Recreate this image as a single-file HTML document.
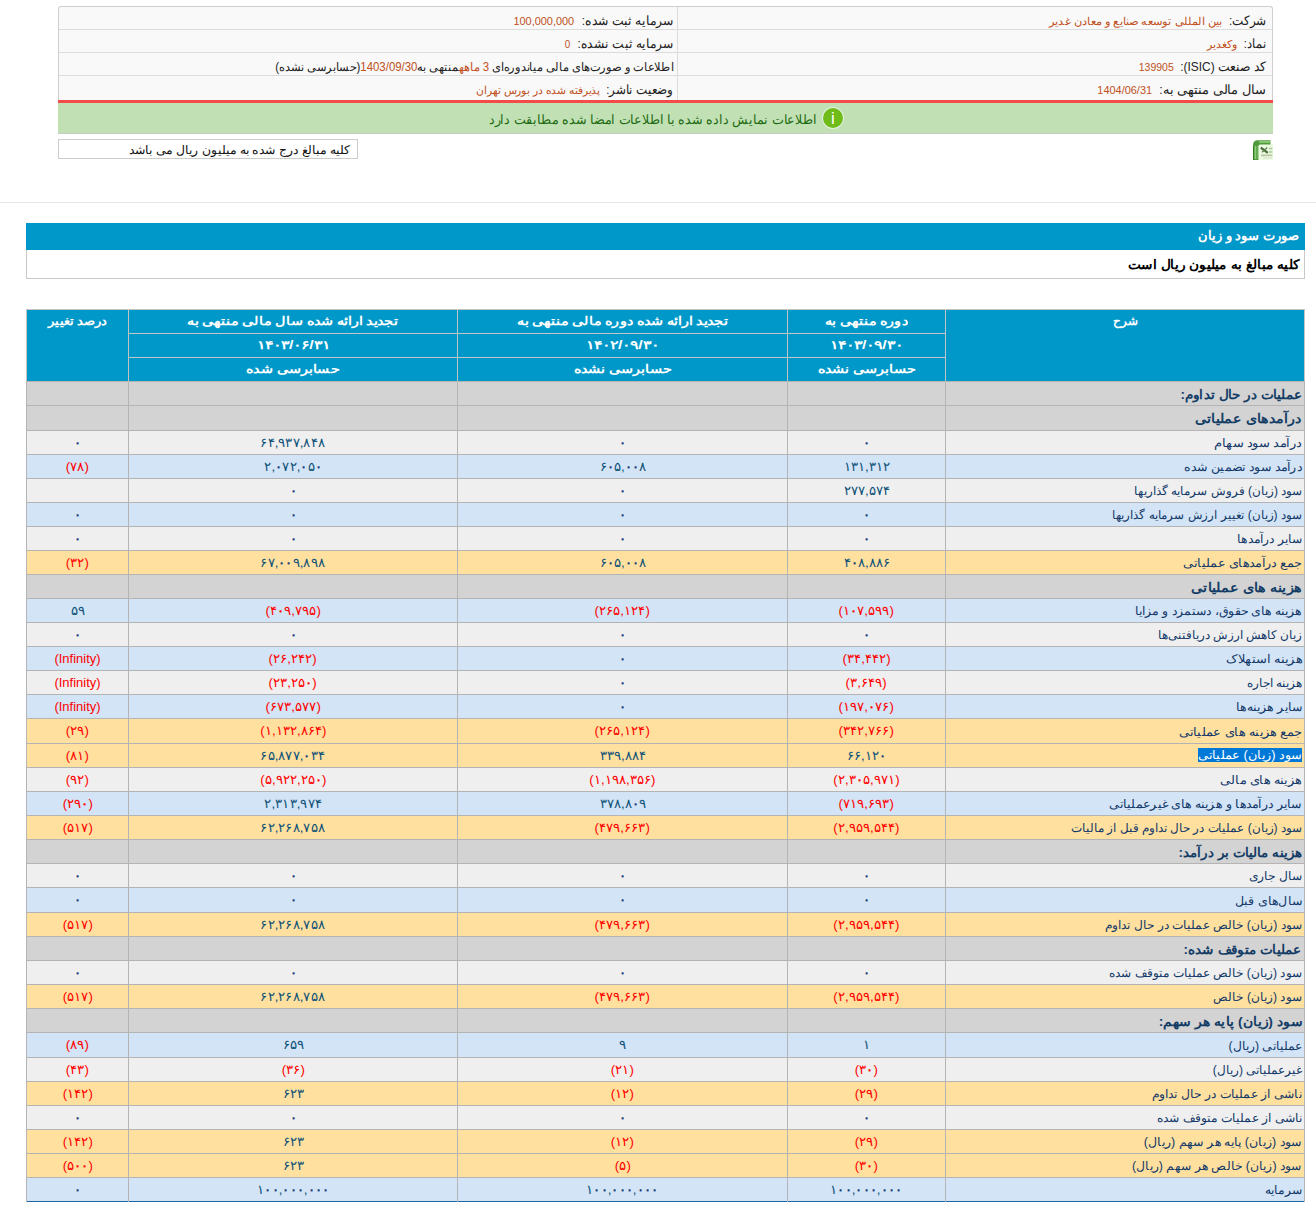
<!DOCTYPE html>
<html lang="fa"><head><meta charset="utf-8"><title>Codal</title>
<style>
*{box-sizing:border-box}
html,body{margin:0;padding:0;background:#fff;width:1316px;height:1230px;overflow:hidden;font-family:"Liberation Sans",sans-serif;}
.a{position:absolute}
.t{white-space:nowrap;direction:rtl}
.s{display:inline-block;white-space:nowrap}
.iv{color:#c0501c;font-size:11px}
.il{position:absolute;height:23px;line-height:23px;font-size:12.5px;color:#222;white-space:nowrap;direction:rtl}
.hc{position:absolute;color:#fff;font-weight:bold;font-size:12px;text-align:center;height:23px;line-height:23px;white-space:nowrap;direction:rtl}
.rl{position:absolute;left:946px;width:358px;text-align:right;padding-right:2px;font-size:12px;color:#12396a;white-space:nowrap;direction:rtl}
.rh{font-weight:bold;font-size:13px;color:#143d66}
.nc{position:absolute;text-align:center;font-size:13px;white-space:nowrap}
.np{color:#0f5279}.nn{color:#ff0000}
.z{font-weight:bold;color:#173a7a}.nn .z{color:#ff0000}
</style></head><body>

<div class="a" style="left:58px;top:6px;width:1215px;height:95px;background:#f9f9f9;border:1px solid #cfcfcf;border-bottom:none;border-radius:3px 3px 0 0"></div>
<div class="a" style="left:59px;top:29px;width:1213px;height:1px;background:#dcdcdc"></div>
<div class="a" style="left:59px;top:52px;width:1213px;height:1px;background:#dcdcdc"></div>
<div class="a" style="left:59px;top:75px;width:1213px;height:1px;background:#dcdcdc"></div>
<div class="a" style="left:677px;top:7px;width:1px;height:93px;background:#dcdcdc"></div>
<div class="a t" style="right:49.80px;top:10px;height:23px;line-height:23px;font-size:12.5px;color:#222"><span class="s" style="transform:scaleX(0.9238);transform-origin:right center">شرکت:</span></div>
<div class="a t" style="right:93.60px;top:10px;height:23px;line-height:23px;font-size:11px;color:#c0501c"><span class="s" style="transform:scaleX(1.0356);transform-origin:right center">بین المللی توسعه صنایع و معادن غدیر</span></div>
<div class="a t" style="right:49.80px;top:33px;height:23px;line-height:23px;font-size:12.5px;color:#222"><span class="s" style="transform:scaleX(0.8946);transform-origin:right center">نماد:</span></div>
<div class="a t" style="right:79.00px;top:33px;height:23px;line-height:23px;font-size:11px;color:#c0501c"><span class="s" style="transform:scaleX(1.0034);transform-origin:right center">وکغدیر</span></div>
<div class="a t" style="right:49.80px;top:56px;height:23px;line-height:23px;font-size:12.5px;color:#222"><span class="s" style="transform:scaleX(0.9526);transform-origin:right center">کد صنعت (ISIC):</span></div>
<div class="a t" style="right:142.50px;top:56px;height:23px;line-height:23px;font-size:11px;color:#c0501c"><span class="s" style="transform:scaleX(0.9532);transform-origin:right center">139905</span></div>
<div class="a t" style="right:49.80px;top:79px;height:23px;line-height:23px;font-size:12.5px;color:#222"><span class="s" style="transform:scaleX(0.9980);transform-origin:right center">سال مالی منتهی به:</span></div>
<div class="a t" style="right:163.80px;top:79px;height:23px;line-height:23px;font-size:11px;color:#c0501c"><span class="s" style="transform:scaleX(0.9934);transform-origin:right center">1404/06/31</span></div>
<div class="a t" style="right:642.90px;top:10px;height:23px;line-height:23px;font-size:12.5px;color:#222"><span class="s" style="transform:scaleX(0.9520);transform-origin:right center">سرمایه ثبت شده:</span></div>
<div class="a t" style="right:741.40px;top:10px;height:23px;line-height:23px;font-size:11px;color:#c0501c"><span class="s" style="transform:scaleX(0.9923);transform-origin:right center">100,000,000</span></div>
<div class="a t" style="right:642.90px;top:33px;height:23px;line-height:23px;font-size:12.5px;color:#222"><span class="s" style="transform:scaleX(0.9455);transform-origin:right center">سرمایه ثبت نشده:</span></div>
<div class="a t" style="right:745.60px;top:33px;height:23px;line-height:23px;font-size:11px;color:#c0501c"><span class="s" style="transform:scaleX(0.8979);transform-origin:right center">0</span></div>
<div class="a t" style="right:642.90px;top:56px;height:23px;line-height:23px;font-size:12px;color:#222"><span class="s" style="transform:scaleX(0.9514);transform-origin:right center">اطلاعات و صورت‌های مالی میاندوره‌ای <span style="color:#c0501c">3 ماهه</span>منتهی به<span style="color:#c0501c">1403/09/30</span>(حسابرسی نشده)</span></div>
<div class="a t" style="right:642.90px;top:79px;height:23px;line-height:23px;font-size:12.5px;color:#222"><span class="s" style="transform:scaleX(0.9156);transform-origin:right center">وضعیت ناشر:</span></div>
<div class="a t" style="right:715.90px;top:79px;height:23px;line-height:23px;font-size:11px;color:#c0501c"><span class="s" style="transform:scaleX(0.9746);transform-origin:right center">پذیرفته شده در بورس تهران</span></div>
<div class="a" style="left:58px;top:100px;width:1215px;height:3px;background:#f34a4a"></div>
<div class="a" style="left:58px;top:103px;width:1215px;height:31px;background:#c1e1b5;border-bottom:1px solid #c9c9c9"></div>
<div class="a" style="left:823px;top:108px;width:20px;height:20px;border-radius:50%;background:#6fbb18;box-shadow:0 0 0 1px rgba(255,255,255,.55);color:#fff;font-size:17px;line-height:21px;text-align:center">i</div>
<div class="a t" style="right:499px;top:105px;height:30px;line-height:30px;font-size:12.7px;color:#1e6b12"><span class="s" id="grn" style="transform:scaleX(0.977);transform-origin:right center">اطلاعات نمایش داده شده با اطلاعات امضا شده مطابقت دارد</span></div>
<svg class="a" style="left:1253px;top:140px" width="20" height="20" viewBox="0 0 20 20">
<rect x="5" y="4" width="15" height="16" fill="#eafbe0"/>
<path d="M0 20 V5 Q0 0.3 5 0.3 H17.5 V4.6 H7 Q5.4 4.6 5.4 6.5 V20 Z" fill="#4f9a3a"/>
<rect x="0" y="6" width="1" height="14" fill="#2f7a20"/>
<rect x="1.6" y="6" width="1.4" height="13" fill="#90cc7c"/>
<rect x="3.6" y="6" width="1" height="13" fill="#7dbb6a"/>
<rect x="6" y="1.4" width="11" height="1.1" fill="#b2e6a0"/>
<path d="M7.8 7.6 L14.8 12.8" stroke="#4a6a3a" stroke-width="2.2"/>
<path d="M14.2 7.4 L9 12.2" stroke="#5f7d4f" stroke-width="1.3"/>
<rect x="16" y="7.8" width="3.4" height="1.5" fill="#aac59c"/>
<rect x="16" y="11.2" width="3.4" height="1.5" fill="#aac59c"/>
<rect x="8" y="14.5" width="11.4" height="1.7" fill="#b9c6a0"/>
<rect x="10" y="17.4" width="9" height="1" fill="#d9ded5"/>
</svg>
<div class="a t" style="left:58px;top:139px;width:300px;height:20px;border:1px solid #cccccc;background:#fff;line-height:21px;font-size:12px;color:#111;padding-right:6px;text-align:right"><span class="s" id="note" style="transform:scaleX(1.034);transform-origin:right center">کلیه مبالغ درج شده به میلیون ریال می باشد</span></div>
<div class="a" style="left:0;top:202px;width:1316px;height:1px;background:#e8e8e8"></div>
<div class="a t" style="left:26px;top:223px;width:1279px;height:27px;background:#0097c9;color:#fff;font-weight:bold;font-size:13px;line-height:26px;text-align:right;padding-right:6px">صورت سود و زیان</div>
<div class="a t" style="left:26px;top:250px;width:1279px;height:29px;background:#fff;border:1px solid #c8c8c8;border-top:none;color:#000;font-weight:bold;font-size:13px;line-height:29px;text-align:right;padding-right:5px"><span class="s" style="transform:scaleX(1.05);transform-origin:right center">کلیه مبالغ به میلیون ریال است</span></div>
<div class="a" style="left:26px;top:309px;width:1279px;height:73px;background:#0097c9"></div>
<div class="a" style="left:26px;top:309px;width:1px;height:73px;background:#c4c4c4"></div>
<div class="a" style="left:128px;top:309px;width:1px;height:73px;background:#c4c4c4"></div>
<div class="a" style="left:457px;top:309px;width:1px;height:73px;background:#c4c4c4"></div>
<div class="a" style="left:787px;top:309px;width:1px;height:73px;background:#c4c4c4"></div>
<div class="a" style="left:945px;top:309px;width:1px;height:73px;background:#c4c4c4"></div>
<div class="a" style="left:1304px;top:309px;width:1px;height:73px;background:#c4c4c4"></div>
<div class="a" style="left:26px;top:309px;width:1279px;height:1px;background:#c4c4c4"></div>
<div class="a" style="left:128px;top:333px;width:818px;height:1px;background:#c4c4c4"></div>
<div class="a" style="left:128px;top:357px;width:818px;height:1px;background:#c4c4c4"></div>
<div class="hc" style="left:946px;top:310px;width:358px"><span class="s" style="transform:scaleX(1.0)">شرح</span></div>
<div class="hc" style="left:27px;top:310px;width:101px"><span class="s" style="transform:scaleX(1.09)">درصد تغییر</span></div>
<div class="hc" style="left:788px;top:310px;width:157px"><span class="s" style="transform:scaleX(1.2)">دوره منتهی به</span></div>
<div class="hc" style="left:788px;top:334px;width:157px"><span class="s" style="transform:scaleX(1.33)">۱۴۰۳/۰۹/۳۰</span></div>
<div class="hc" style="left:788px;top:358px;width:157px"><span class="s" style="transform:scaleX(1.2)">حسابرسی نشده</span></div>
<div class="hc" style="left:458px;top:310px;width:329px"><span class="s" style="transform:scaleX(1.2)">تجدید ارائه شده دوره مالی منتهی به</span></div>
<div class="hc" style="left:458px;top:334px;width:329px"><span class="s" style="transform:scaleX(1.33)">۱۴۰۲/۰۹/۳۰</span></div>
<div class="hc" style="left:458px;top:358px;width:329px"><span class="s" style="transform:scaleX(1.2)">حسابرسی نشده</span></div>
<div class="hc" style="left:129px;top:310px;width:328px"><span class="s" style="transform:scaleX(1.2)">تجدید ارائه شده سال مالی منتهی به</span></div>
<div class="hc" style="left:129px;top:334px;width:328px"><span class="s" style="transform:scaleX(1.33)">۱۴۰۳/۰۶/۳۱</span></div>
<div class="hc" style="left:129px;top:358px;width:328px"><span class="s" style="transform:scaleX(1.2)">حسابرسی شده</span></div>
<div class="a" style="left:26px;top:381px;width:1279px;height:24px;background:#d3d3d3;border-top:1px solid #b4b4b4"></div>
<div class="a" style="left:26px;top:405px;width:1279px;height:25px;background:#d3d3d3;border-top:1px solid #b4b4b4"></div>
<div class="a" style="left:26px;top:430px;width:1279px;height:24px;background:#efefef;border-top:1px solid #b4b4b4"></div>
<div class="a" style="left:26px;top:454px;width:1279px;height:24px;background:#d2e4f5;border-top:1px solid #b4b4b4"></div>
<div class="a" style="left:26px;top:478px;width:1279px;height:24px;background:#efefef;border-top:1px solid #b4b4b4"></div>
<div class="a" style="left:26px;top:502px;width:1279px;height:24px;background:#d2e4f5;border-top:1px solid #b4b4b4"></div>
<div class="a" style="left:26px;top:526px;width:1279px;height:24px;background:#efefef;border-top:1px solid #b4b4b4"></div>
<div class="a" style="left:26px;top:550px;width:1279px;height:24px;background:#ffe09e;border-top:1px solid #b4b4b4"></div>
<div class="a" style="left:26px;top:574px;width:1279px;height:24px;background:#d3d3d3;border-top:1px solid #b4b4b4"></div>
<div class="a" style="left:26px;top:598px;width:1279px;height:24px;background:#d2e4f5;border-top:1px solid #b4b4b4"></div>
<div class="a" style="left:26px;top:622px;width:1279px;height:24px;background:#efefef;border-top:1px solid #b4b4b4"></div>
<div class="a" style="left:26px;top:646px;width:1279px;height:24px;background:#d2e4f5;border-top:1px solid #b4b4b4"></div>
<div class="a" style="left:26px;top:670px;width:1279px;height:24px;background:#efefef;border-top:1px solid #b4b4b4"></div>
<div class="a" style="left:26px;top:694px;width:1279px;height:24px;background:#d2e4f5;border-top:1px solid #b4b4b4"></div>
<div class="a" style="left:26px;top:718px;width:1279px;height:25px;background:#ffe09e;border-top:1px solid #b4b4b4"></div>
<div class="a" style="left:26px;top:743px;width:1279px;height:24px;background:#ffe09e;border-top:1px solid #b4b4b4"></div>
<div class="a" style="left:26px;top:767px;width:1279px;height:24px;background:#efefef;border-top:1px solid #b4b4b4"></div>
<div class="a" style="left:26px;top:791px;width:1279px;height:24px;background:#d2e4f5;border-top:1px solid #b4b4b4"></div>
<div class="a" style="left:26px;top:815px;width:1279px;height:24px;background:#ffe09e;border-top:1px solid #b4b4b4"></div>
<div class="a" style="left:26px;top:839px;width:1279px;height:24px;background:#d3d3d3;border-top:1px solid #b4b4b4"></div>
<div class="a" style="left:26px;top:863px;width:1279px;height:24px;background:#efefef;border-top:1px solid #b4b4b4"></div>
<div class="a" style="left:26px;top:887px;width:1279px;height:25px;background:#d2e4f5;border-top:1px solid #b4b4b4"></div>
<div class="a" style="left:26px;top:912px;width:1279px;height:24px;background:#ffe09e;border-top:1px solid #b4b4b4"></div>
<div class="a" style="left:26px;top:936px;width:1279px;height:24px;background:#d3d3d3;border-top:1px solid #b4b4b4"></div>
<div class="a" style="left:26px;top:960px;width:1279px;height:24px;background:#efefef;border-top:1px solid #b4b4b4"></div>
<div class="a" style="left:26px;top:984px;width:1279px;height:24px;background:#ffe09e;border-top:1px solid #b4b4b4"></div>
<div class="a" style="left:26px;top:1008px;width:1279px;height:24px;background:#d3d3d3;border-top:1px solid #b4b4b4"></div>
<div class="a" style="left:26px;top:1032px;width:1279px;height:25px;background:#d2e4f5;border-top:1px solid #b4b4b4"></div>
<div class="a" style="left:26px;top:1057px;width:1279px;height:24px;background:#efefef;border-top:1px solid #b4b4b4"></div>
<div class="a" style="left:26px;top:1081px;width:1279px;height:24px;background:#ffe09e;border-top:1px solid #b4b4b4"></div>
<div class="a" style="left:26px;top:1105px;width:1279px;height:24px;background:#efefef;border-top:1px solid #b4b4b4"></div>
<div class="a" style="left:26px;top:1129px;width:1279px;height:24px;background:#ffe09e;border-top:1px solid #b4b4b4"></div>
<div class="a" style="left:26px;top:1153px;width:1279px;height:24px;background:#ffe09e;border-top:1px solid #b4b4b4"></div>
<div class="a" style="left:26px;top:1177px;width:1279px;height:24px;background:#d2e4f5;border-top:1px solid #b4b4b4"></div>
<div class="a" style="left:27px;top:1201px;width:1277px;height:1px;background:#1b67a4"></div>
<div class="a" style="left:26px;top:381px;width:1px;height:821px;background:#b4b4b4"></div>
<div class="a" style="left:128px;top:381px;width:1px;height:821px;background:#b4b4b4"></div>
<div class="a" style="left:457px;top:381px;width:1px;height:821px;background:#b4b4b4"></div>
<div class="a" style="left:787px;top:381px;width:1px;height:821px;background:#b4b4b4"></div>
<div class="a" style="left:945px;top:381px;width:1px;height:821px;background:#b4b4b4"></div>
<div class="a" style="left:1304px;top:381px;width:1px;height:821px;background:#b4b4b4"></div>
<div class="rl rh" style="top:383.000px;height:23.000px;line-height:23.000px"><span class="s" style="transform:scaleX(1.0390);transform-origin:right center">عملیات در حال تداوم:</span></div>
<div class="rl rh" style="top:407.000px;height:24.000px;line-height:24.000px"><span class="s" style="transform:scaleX(1.0929);transform-origin:right center">درآمدهای عملیاتی</span></div>
<div class="rl" style="top:432.000px;height:23.000px;line-height:23.000px"><span class="s" style="transform:scaleX(1.0852);transform-origin:right center">درآمد سود سهام</span></div>
<div class="nc np" style="left:788px;top:431.000px;width:157px;height:23.000px;line-height:23.000px"><span class="s" style="transform:scaleX(1.02)"><b class="z">۰</b></span></div>
<div class="nc np" style="left:458px;top:431.000px;width:329px;height:23.000px;line-height:23.000px"><span class="s" style="transform:scaleX(1.02)"><b class="z">۰</b></span></div>
<div class="nc np" style="left:129px;top:431.000px;width:328px;height:23.000px;line-height:23.000px"><span class="s" style="transform:scaleX(1.02)">۶۴,۹۳۷,۸۴۸</span></div>
<div class="nc np" style="left:27px;top:431.000px;width:101px;height:23.000px;line-height:23.000px"><span class="s" style="transform:scaleX(1.02)"><b class="z">۰</b></span></div>
<div class="rl" style="top:456.000px;height:23.000px;line-height:23.000px"><span class="s" style="transform:scaleX(1.0502);transform-origin:right center">درآمد سود تضمین شده</span></div>
<div class="nc np" style="left:788px;top:455.000px;width:157px;height:23.000px;line-height:23.000px"><span class="s" style="transform:scaleX(1.02)">۱۳۱,۳۱۲</span></div>
<div class="nc np" style="left:458px;top:455.000px;width:329px;height:23.000px;line-height:23.000px"><span class="s" style="transform:scaleX(1.02)">۶<b class="z">۰</b>۵,<b class="z">۰</b><b class="z">۰</b>۸</span></div>
<div class="nc np" style="left:129px;top:455.000px;width:328px;height:23.000px;line-height:23.000px"><span class="s" style="transform:scaleX(1.02)">۲,<b class="z">۰</b>۷۲,<b class="z">۰</b>۵<b class="z">۰</b></span></div>
<div class="nc nn" style="left:27px;top:455.000px;width:101px;height:23.000px;line-height:23.000px"><span class="s" style="transform:scaleX(1.02)">(۷۸)</span></div>
<div class="rl" style="top:480.000px;height:23.000px;line-height:23.000px"><span class="s" style="transform:scaleX(0.9995);transform-origin:right center">سود (زیان) فروش سرمایه گذاریها</span></div>
<div class="nc np" style="left:788px;top:479.000px;width:157px;height:23.000px;line-height:23.000px"><span class="s" style="transform:scaleX(1.02)">۲۷۷,۵۷۴</span></div>
<div class="nc np" style="left:458px;top:479.000px;width:329px;height:23.000px;line-height:23.000px"><span class="s" style="transform:scaleX(1.02)"><b class="z">۰</b></span></div>
<div class="nc np" style="left:129px;top:479.000px;width:328px;height:23.000px;line-height:23.000px"><span class="s" style="transform:scaleX(1.02)"><b class="z">۰</b></span></div>
<div class="rl" style="top:504.000px;height:23.000px;line-height:23.000px"><span class="s" style="transform:scaleX(0.9919);transform-origin:right center">سود (زیان) تغییر ارزش سرمایه گذاریها</span></div>
<div class="nc np" style="left:788px;top:503.000px;width:157px;height:23.000px;line-height:23.000px"><span class="s" style="transform:scaleX(1.02)"><b class="z">۰</b></span></div>
<div class="nc np" style="left:458px;top:503.000px;width:329px;height:23.000px;line-height:23.000px"><span class="s" style="transform:scaleX(1.02)"><b class="z">۰</b></span></div>
<div class="nc np" style="left:129px;top:503.000px;width:328px;height:23.000px;line-height:23.000px"><span class="s" style="transform:scaleX(1.02)"><b class="z">۰</b></span></div>
<div class="nc np" style="left:27px;top:503.000px;width:101px;height:23.000px;line-height:23.000px"><span class="s" style="transform:scaleX(1.02)"><b class="z">۰</b></span></div>
<div class="rl" style="top:528.000px;height:23.000px;line-height:23.000px"><span class="s" style="transform:scaleX(1.0280);transform-origin:right center">سایر درآمدها</span></div>
<div class="nc np" style="left:788px;top:527.000px;width:157px;height:23.000px;line-height:23.000px"><span class="s" style="transform:scaleX(1.02)"><b class="z">۰</b></span></div>
<div class="nc np" style="left:458px;top:527.000px;width:329px;height:23.000px;line-height:23.000px"><span class="s" style="transform:scaleX(1.02)"><b class="z">۰</b></span></div>
<div class="nc np" style="left:129px;top:527.000px;width:328px;height:23.000px;line-height:23.000px"><span class="s" style="transform:scaleX(1.02)"><b class="z">۰</b></span></div>
<div class="nc np" style="left:27px;top:527.000px;width:101px;height:23.000px;line-height:23.000px"><span class="s" style="transform:scaleX(1.02)"><b class="z">۰</b></span></div>
<div class="rl" style="top:552.000px;height:23.000px;line-height:23.000px"><span class="s" style="transform:scaleX(1.0679);transform-origin:right center">جمع درآمدهای عملیاتی</span></div>
<div class="nc np" style="left:788px;top:551.000px;width:157px;height:23.000px;line-height:23.000px"><span class="s" style="transform:scaleX(1.02)">۴<b class="z">۰</b>۸,۸۸۶</span></div>
<div class="nc np" style="left:458px;top:551.000px;width:329px;height:23.000px;line-height:23.000px"><span class="s" style="transform:scaleX(1.02)">۶<b class="z">۰</b>۵,<b class="z">۰</b><b class="z">۰</b>۸</span></div>
<div class="nc np" style="left:129px;top:551.000px;width:328px;height:23.000px;line-height:23.000px"><span class="s" style="transform:scaleX(1.02)">۶۷,<b class="z">۰</b><b class="z">۰</b>۹,۸۹۸</span></div>
<div class="nc nn" style="left:27px;top:551.000px;width:101px;height:23.000px;line-height:23.000px"><span class="s" style="transform:scaleX(1.02)">(۳۲)</span></div>
<div class="rl rh" style="top:576.000px;height:23.000px;line-height:23.000px"><span class="s" style="transform:scaleX(1.1108);transform-origin:right center">هزینه های عملیاتی</span></div>
<div class="rl" style="top:600.000px;height:23.000px;line-height:23.000px"><span class="s" style="transform:scaleX(1.0386);transform-origin:right center">هزینه های حقوق، دستمزد و مزایا</span></div>
<div class="nc nn" style="left:788px;top:599.000px;width:157px;height:23.000px;line-height:23.000px"><span class="s" style="transform:scaleX(1.02)">(۱<b class="z">۰</b>۷,۵۹۹)</span></div>
<div class="nc nn" style="left:458px;top:599.000px;width:329px;height:23.000px;line-height:23.000px"><span class="s" style="transform:scaleX(1.02)">(۲۶۵,۱۲۴)</span></div>
<div class="nc nn" style="left:129px;top:599.000px;width:328px;height:23.000px;line-height:23.000px"><span class="s" style="transform:scaleX(1.02)">(۴<b class="z">۰</b>۹,۷۹۵)</span></div>
<div class="nc np" style="left:27px;top:599.000px;width:101px;height:23.000px;line-height:23.000px"><span class="s" style="transform:scaleX(1.02)">۵۹</span></div>
<div class="rl" style="top:624.000px;height:23.000px;line-height:23.000px"><span class="s" style="transform:scaleX(0.9941);transform-origin:right center">زیان کاهش ارزش دریافتنی‌ها</span></div>
<div class="nc np" style="left:788px;top:623.000px;width:157px;height:23.000px;line-height:23.000px"><span class="s" style="transform:scaleX(1.02)"><b class="z">۰</b></span></div>
<div class="nc np" style="left:458px;top:623.000px;width:329px;height:23.000px;line-height:23.000px"><span class="s" style="transform:scaleX(1.02)"><b class="z">۰</b></span></div>
<div class="nc np" style="left:129px;top:623.000px;width:328px;height:23.000px;line-height:23.000px"><span class="s" style="transform:scaleX(1.02)"><b class="z">۰</b></span></div>
<div class="nc np" style="left:27px;top:623.000px;width:101px;height:23.000px;line-height:23.000px"><span class="s" style="transform:scaleX(1.02)"><b class="z">۰</b></span></div>
<div class="rl" style="top:648.000px;height:23.000px;line-height:23.000px"><span class="s" style="transform:scaleX(1.0890);transform-origin:right center">هزینه استهلاک</span></div>
<div class="nc nn" style="left:788px;top:647.000px;width:157px;height:23.000px;line-height:23.000px"><span class="s" style="transform:scaleX(1.02)">(۳۴,۴۴۲)</span></div>
<div class="nc np" style="left:458px;top:647.000px;width:329px;height:23.000px;line-height:23.000px"><span class="s" style="transform:scaleX(1.02)"><b class="z">۰</b></span></div>
<div class="nc nn" style="left:129px;top:647.000px;width:328px;height:23.000px;line-height:23.000px"><span class="s" style="transform:scaleX(1.02)">(۲۶,۲۴۲)</span></div>
<div class="nc nn" style="left:27px;top:647.000px;width:101px;height:23.000px;line-height:23.000px">(Infinity)</div>
<div class="rl" style="top:672.000px;height:23.000px;line-height:23.000px"><span class="s" style="transform:scaleX(1.0036);transform-origin:right center">هزینه اجاره</span></div>
<div class="nc nn" style="left:788px;top:671.000px;width:157px;height:23.000px;line-height:23.000px"><span class="s" style="transform:scaleX(1.02)">(۳,۶۴۹)</span></div>
<div class="nc np" style="left:458px;top:671.000px;width:329px;height:23.000px;line-height:23.000px"><span class="s" style="transform:scaleX(1.02)"><b class="z">۰</b></span></div>
<div class="nc nn" style="left:129px;top:671.000px;width:328px;height:23.000px;line-height:23.000px"><span class="s" style="transform:scaleX(1.02)">(۲۳,۲۵<b class="z">۰</b>)</span></div>
<div class="nc nn" style="left:27px;top:671.000px;width:101px;height:23.000px;line-height:23.000px">(Infinity)</div>
<div class="rl" style="top:696.000px;height:23.000px;line-height:23.000px"><span class="s" style="transform:scaleX(1.0453);transform-origin:right center">سایر هزینه‌ها</span></div>
<div class="nc nn" style="left:788px;top:695.000px;width:157px;height:23.000px;line-height:23.000px"><span class="s" style="transform:scaleX(1.02)">(۱۹۷,<b class="z">۰</b>۷۶)</span></div>
<div class="nc np" style="left:458px;top:695.000px;width:329px;height:23.000px;line-height:23.000px"><span class="s" style="transform:scaleX(1.02)"><b class="z">۰</b></span></div>
<div class="nc nn" style="left:129px;top:695.000px;width:328px;height:23.000px;line-height:23.000px"><span class="s" style="transform:scaleX(1.02)">(۶۷۳,۵۷۷)</span></div>
<div class="nc nn" style="left:27px;top:695.000px;width:101px;height:23.000px;line-height:23.000px">(Infinity)</div>
<div class="rl" style="top:720.000px;height:24.000px;line-height:24.000px"><span class="s" style="transform:scaleX(1.0797);transform-origin:right center">جمع هزینه های عملیاتی</span></div>
<div class="nc nn" style="left:788px;top:719.000px;width:157px;height:24.000px;line-height:24.000px"><span class="s" style="transform:scaleX(1.02)">(۳۴۲,۷۶۶)</span></div>
<div class="nc nn" style="left:458px;top:719.000px;width:329px;height:24.000px;line-height:24.000px"><span class="s" style="transform:scaleX(1.02)">(۲۶۵,۱۲۴)</span></div>
<div class="nc nn" style="left:129px;top:719.000px;width:328px;height:24.000px;line-height:24.000px"><span class="s" style="transform:scaleX(1.02)">(۱,۱۳۲,۸۶۴)</span></div>
<div class="nc nn" style="left:27px;top:719.000px;width:101px;height:24.000px;line-height:24.000px"><span class="s" style="transform:scaleX(1.02)">(۲۹)</span></div>
<div class="a t" style="left:1198px;top:748px;width:104px;height:14px;background:#0078d7;color:#fff;font-size:12px;line-height:14px;text-align:right;overflow:hidden"><span class="s" style="transform:scaleX(1.07);transform-origin:right center">سود (زیان) عملیاتی</span></div>
<div class="nc np" style="left:788px;top:744.000px;width:157px;height:23.000px;line-height:23.000px"><span class="s" style="transform:scaleX(1.02)">۶۶,۱۲<b class="z">۰</b></span></div>
<div class="nc np" style="left:458px;top:744.000px;width:329px;height:23.000px;line-height:23.000px"><span class="s" style="transform:scaleX(1.02)">۳۳۹,۸۸۴</span></div>
<div class="nc np" style="left:129px;top:744.000px;width:328px;height:23.000px;line-height:23.000px"><span class="s" style="transform:scaleX(1.02)">۶۵,۸۷۷,<b class="z">۰</b>۳۴</span></div>
<div class="nc nn" style="left:27px;top:744.000px;width:101px;height:23.000px;line-height:23.000px"><span class="s" style="transform:scaleX(1.02)">(۸۱)</span></div>
<div class="rl" style="top:769.000px;height:23.000px;line-height:23.000px"><span class="s" style="transform:scaleX(1.0738);transform-origin:right center">هزینه های مالی</span></div>
<div class="nc nn" style="left:788px;top:768.000px;width:157px;height:23.000px;line-height:23.000px"><span class="s" style="transform:scaleX(1.02)">(۲,۳<b class="z">۰</b>۵,۹۷۱)</span></div>
<div class="nc nn" style="left:458px;top:768.000px;width:329px;height:23.000px;line-height:23.000px"><span class="s" style="transform:scaleX(1.02)">(۱,۱۹۸,۳۵۶)</span></div>
<div class="nc nn" style="left:129px;top:768.000px;width:328px;height:23.000px;line-height:23.000px"><span class="s" style="transform:scaleX(1.02)">(۵,۹۲۲,۲۵<b class="z">۰</b>)</span></div>
<div class="nc nn" style="left:27px;top:768.000px;width:101px;height:23.000px;line-height:23.000px"><span class="s" style="transform:scaleX(1.02)">(۹۲)</span></div>
<div class="rl" style="top:793.000px;height:23.000px;line-height:23.000px"><span class="s" style="transform:scaleX(1.0470);transform-origin:right center">سایر درآمدها و هزینه های غیرعملیاتی</span></div>
<div class="nc nn" style="left:788px;top:792.000px;width:157px;height:23.000px;line-height:23.000px"><span class="s" style="transform:scaleX(1.02)">(۷۱۹,۶۹۳)</span></div>
<div class="nc np" style="left:458px;top:792.000px;width:329px;height:23.000px;line-height:23.000px"><span class="s" style="transform:scaleX(1.02)">۳۷۸,۸<b class="z">۰</b>۹</span></div>
<div class="nc np" style="left:129px;top:792.000px;width:328px;height:23.000px;line-height:23.000px"><span class="s" style="transform:scaleX(1.02)">۲,۳۱۳,۹۷۴</span></div>
<div class="nc nn" style="left:27px;top:792.000px;width:101px;height:23.000px;line-height:23.000px"><span class="s" style="transform:scaleX(1.02)">(۲۹<b class="z">۰</b>)</span></div>
<div class="rl" style="top:817.000px;height:23.000px;line-height:23.000px"><span class="s" style="transform:scaleX(0.9942);transform-origin:right center">سود (زیان) عملیات در حال تداوم قبل از مالیات</span></div>
<div class="nc nn" style="left:788px;top:816.000px;width:157px;height:23.000px;line-height:23.000px"><span class="s" style="transform:scaleX(1.02)">(۲,۹۵۹,۵۴۴)</span></div>
<div class="nc nn" style="left:458px;top:816.000px;width:329px;height:23.000px;line-height:23.000px"><span class="s" style="transform:scaleX(1.02)">(۴۷۹,۶۶۳)</span></div>
<div class="nc np" style="left:129px;top:816.000px;width:328px;height:23.000px;line-height:23.000px"><span class="s" style="transform:scaleX(1.02)">۶۲,۲۶۸,۷۵۸</span></div>
<div class="nc nn" style="left:27px;top:816.000px;width:101px;height:23.000px;line-height:23.000px"><span class="s" style="transform:scaleX(1.02)">(۵۱۷)</span></div>
<div class="rl rh" style="top:841.000px;height:23.000px;line-height:23.000px"><span class="s" style="transform:scaleX(1.0290);transform-origin:right center">هزینه مالیات بر درآمد:</span></div>
<div class="rl" style="top:865.000px;height:23.000px;line-height:23.000px"><span class="s" style="transform:scaleX(1.0194);transform-origin:right center">سال جاری</span></div>
<div class="nc np" style="left:788px;top:864.000px;width:157px;height:23.000px;line-height:23.000px"><span class="s" style="transform:scaleX(1.02)"><b class="z">۰</b></span></div>
<div class="nc np" style="left:458px;top:864.000px;width:329px;height:23.000px;line-height:23.000px"><span class="s" style="transform:scaleX(1.02)"><b class="z">۰</b></span></div>
<div class="nc np" style="left:129px;top:864.000px;width:328px;height:23.000px;line-height:23.000px"><span class="s" style="transform:scaleX(1.02)"><b class="z">۰</b></span></div>
<div class="nc np" style="left:27px;top:864.000px;width:101px;height:23.000px;line-height:23.000px"><span class="s" style="transform:scaleX(1.02)"><b class="z">۰</b></span></div>
<div class="rl" style="top:889.000px;height:24.000px;line-height:24.000px"><span class="s" style="transform:scaleX(1.0503);transform-origin:right center">سال‌های قبل</span></div>
<div class="nc np" style="left:788px;top:888.000px;width:157px;height:24.000px;line-height:24.000px"><span class="s" style="transform:scaleX(1.02)"><b class="z">۰</b></span></div>
<div class="nc np" style="left:458px;top:888.000px;width:329px;height:24.000px;line-height:24.000px"><span class="s" style="transform:scaleX(1.02)"><b class="z">۰</b></span></div>
<div class="nc np" style="left:129px;top:888.000px;width:328px;height:24.000px;line-height:24.000px"><span class="s" style="transform:scaleX(1.02)"><b class="z">۰</b></span></div>
<div class="nc np" style="left:27px;top:888.000px;width:101px;height:24.000px;line-height:24.000px"><span class="s" style="transform:scaleX(1.02)"><b class="z">۰</b></span></div>
<div class="rl" style="top:914.000px;height:23.000px;line-height:23.000px"><span class="s" style="transform:scaleX(1.0152);transform-origin:right center">سود (زیان) خالص عملیات در حال تداوم</span></div>
<div class="nc nn" style="left:788px;top:913.000px;width:157px;height:23.000px;line-height:23.000px"><span class="s" style="transform:scaleX(1.02)">(۲,۹۵۹,۵۴۴)</span></div>
<div class="nc nn" style="left:458px;top:913.000px;width:329px;height:23.000px;line-height:23.000px"><span class="s" style="transform:scaleX(1.02)">(۴۷۹,۶۶۳)</span></div>
<div class="nc np" style="left:129px;top:913.000px;width:328px;height:23.000px;line-height:23.000px"><span class="s" style="transform:scaleX(1.02)">۶۲,۲۶۸,۷۵۸</span></div>
<div class="nc nn" style="left:27px;top:913.000px;width:101px;height:23.000px;line-height:23.000px"><span class="s" style="transform:scaleX(1.02)">(۵۱۷)</span></div>
<div class="rl rh" style="top:938.000px;height:23.000px;line-height:23.000px"><span class="s" style="transform:scaleX(1.0407);transform-origin:right center">عملیات متوقف شده:</span></div>
<div class="rl" style="top:962.000px;height:23.000px;line-height:23.000px"><span class="s" style="transform:scaleX(1.0086);transform-origin:right center">سود (زیان) خالص عملیات متوقف شده</span></div>
<div class="nc np" style="left:788px;top:961.000px;width:157px;height:23.000px;line-height:23.000px"><span class="s" style="transform:scaleX(1.02)"><b class="z">۰</b></span></div>
<div class="nc np" style="left:458px;top:961.000px;width:329px;height:23.000px;line-height:23.000px"><span class="s" style="transform:scaleX(1.02)"><b class="z">۰</b></span></div>
<div class="nc np" style="left:129px;top:961.000px;width:328px;height:23.000px;line-height:23.000px"><span class="s" style="transform:scaleX(1.02)"><b class="z">۰</b></span></div>
<div class="nc np" style="left:27px;top:961.000px;width:101px;height:23.000px;line-height:23.000px"><span class="s" style="transform:scaleX(1.02)"><b class="z">۰</b></span></div>
<div class="rl" style="top:986.000px;height:23.000px;line-height:23.000px"><span class="s" style="transform:scaleX(1.0079);transform-origin:right center">سود (زیان) خالص</span></div>
<div class="nc nn" style="left:788px;top:985.000px;width:157px;height:23.000px;line-height:23.000px"><span class="s" style="transform:scaleX(1.02)">(۲,۹۵۹,۵۴۴)</span></div>
<div class="nc nn" style="left:458px;top:985.000px;width:329px;height:23.000px;line-height:23.000px"><span class="s" style="transform:scaleX(1.02)">(۴۷۹,۶۶۳)</span></div>
<div class="nc np" style="left:129px;top:985.000px;width:328px;height:23.000px;line-height:23.000px"><span class="s" style="transform:scaleX(1.02)">۶۲,۲۶۸,۷۵۸</span></div>
<div class="nc nn" style="left:27px;top:985.000px;width:101px;height:23.000px;line-height:23.000px"><span class="s" style="transform:scaleX(1.02)">(۵۱۷)</span></div>
<div class="rl rh" style="top:1010.000px;height:23.000px;line-height:23.000px"><span class="s" style="transform:scaleX(1.0683);transform-origin:right center">سود (زیان) پایه هر سهم:</span></div>
<div class="rl" style="top:1034.000px;height:24.000px;line-height:24.000px"><span class="s" style="transform:scaleX(1.0213);transform-origin:right center">عملیاتی (ریال)</span></div>
<div class="nc np" style="left:788px;top:1033.000px;width:157px;height:24.000px;line-height:24.000px"><span class="s" style="transform:scaleX(1.02)">۱</span></div>
<div class="nc np" style="left:458px;top:1033.000px;width:329px;height:24.000px;line-height:24.000px"><span class="s" style="transform:scaleX(1.02)">۹</span></div>
<div class="nc np" style="left:129px;top:1033.000px;width:328px;height:24.000px;line-height:24.000px"><span class="s" style="transform:scaleX(1.02)">۶۵۹</span></div>
<div class="nc nn" style="left:27px;top:1033.000px;width:101px;height:24.000px;line-height:24.000px"><span class="s" style="transform:scaleX(1.02)">(۸۹)</span></div>
<div class="rl" style="top:1059.000px;height:23.000px;line-height:23.000px"><span class="s" style="transform:scaleX(1.0015);transform-origin:right center">غیرعملیاتی (ریال)</span></div>
<div class="nc nn" style="left:788px;top:1058.000px;width:157px;height:23.000px;line-height:23.000px"><span class="s" style="transform:scaleX(1.02)">(۳<b class="z">۰</b>)</span></div>
<div class="nc nn" style="left:458px;top:1058.000px;width:329px;height:23.000px;line-height:23.000px"><span class="s" style="transform:scaleX(1.02)">(۲۱)</span></div>
<div class="nc nn" style="left:129px;top:1058.000px;width:328px;height:23.000px;line-height:23.000px"><span class="s" style="transform:scaleX(1.02)">(۳۶)</span></div>
<div class="nc nn" style="left:27px;top:1058.000px;width:101px;height:23.000px;line-height:23.000px"><span class="s" style="transform:scaleX(1.02)">(۴۳)</span></div>
<div class="rl" style="top:1083.000px;height:23.000px;line-height:23.000px"><span class="s" style="transform:scaleX(1.0291);transform-origin:right center">ناشی از عملیات در حال تداوم</span></div>
<div class="nc nn" style="left:788px;top:1082.000px;width:157px;height:23.000px;line-height:23.000px"><span class="s" style="transform:scaleX(1.02)">(۲۹)</span></div>
<div class="nc nn" style="left:458px;top:1082.000px;width:329px;height:23.000px;line-height:23.000px"><span class="s" style="transform:scaleX(1.02)">(۱۲)</span></div>
<div class="nc np" style="left:129px;top:1082.000px;width:328px;height:23.000px;line-height:23.000px"><span class="s" style="transform:scaleX(1.02)">۶۲۳</span></div>
<div class="nc nn" style="left:27px;top:1082.000px;width:101px;height:23.000px;line-height:23.000px"><span class="s" style="transform:scaleX(1.02)">(۱۴۲)</span></div>
<div class="rl" style="top:1107.000px;height:23.000px;line-height:23.000px"><span class="s" style="transform:scaleX(1.0224);transform-origin:right center">ناشی از عملیات متوقف شده</span></div>
<div class="nc np" style="left:788px;top:1106.000px;width:157px;height:23.000px;line-height:23.000px"><span class="s" style="transform:scaleX(1.02)"><b class="z">۰</b></span></div>
<div class="nc np" style="left:458px;top:1106.000px;width:329px;height:23.000px;line-height:23.000px"><span class="s" style="transform:scaleX(1.02)"><b class="z">۰</b></span></div>
<div class="nc np" style="left:129px;top:1106.000px;width:328px;height:23.000px;line-height:23.000px"><span class="s" style="transform:scaleX(1.02)"><b class="z">۰</b></span></div>
<div class="nc np" style="left:27px;top:1106.000px;width:101px;height:23.000px;line-height:23.000px"><span class="s" style="transform:scaleX(1.02)"><b class="z">۰</b></span></div>
<div class="rl" style="top:1131.000px;height:23.000px;line-height:23.000px"><span class="s" style="transform:scaleX(1.0477);transform-origin:right center">سود (زیان) پایه هر سهم (ریال)</span></div>
<div class="nc nn" style="left:788px;top:1130.000px;width:157px;height:23.000px;line-height:23.000px"><span class="s" style="transform:scaleX(1.02)">(۲۹)</span></div>
<div class="nc nn" style="left:458px;top:1130.000px;width:329px;height:23.000px;line-height:23.000px"><span class="s" style="transform:scaleX(1.02)">(۱۲)</span></div>
<div class="nc np" style="left:129px;top:1130.000px;width:328px;height:23.000px;line-height:23.000px"><span class="s" style="transform:scaleX(1.02)">۶۲۳</span></div>
<div class="nc nn" style="left:27px;top:1130.000px;width:101px;height:23.000px;line-height:23.000px"><span class="s" style="transform:scaleX(1.02)">(۱۴۲)</span></div>
<div class="rl" style="top:1155.000px;height:23.000px;line-height:23.000px"><span class="s" style="transform:scaleX(1.0301);transform-origin:right center">سود (زیان) خالص هر سهم (ریال)</span></div>
<div class="nc nn" style="left:788px;top:1154.000px;width:157px;height:23.000px;line-height:23.000px"><span class="s" style="transform:scaleX(1.02)">(۳<b class="z">۰</b>)</span></div>
<div class="nc nn" style="left:458px;top:1154.000px;width:329px;height:23.000px;line-height:23.000px"><span class="s" style="transform:scaleX(1.02)">(۵)</span></div>
<div class="nc np" style="left:129px;top:1154.000px;width:328px;height:23.000px;line-height:23.000px"><span class="s" style="transform:scaleX(1.02)">۶۲۳</span></div>
<div class="nc nn" style="left:27px;top:1154.000px;width:101px;height:23.000px;line-height:23.000px"><span class="s" style="transform:scaleX(1.02)">(۵<b class="z">۰</b><b class="z">۰</b>)</span></div>
<div class="rl" style="top:1179.000px;height:23.000px;line-height:23.000px"><span class="s" style="transform:scaleX(1.0263);transform-origin:right center">سرمایه</span></div>
<div class="nc np" style="left:788px;top:1178.000px;width:157px;height:23.000px;line-height:23.000px"><span class="s" style="transform:scaleX(1.02)">۱<b class="z">۰</b><b class="z">۰</b>,<b class="z">۰</b><b class="z">۰</b><b class="z">۰</b>,<b class="z">۰</b><b class="z">۰</b><b class="z">۰</b></span></div>
<div class="nc np" style="left:458px;top:1178.000px;width:329px;height:23.000px;line-height:23.000px"><span class="s" style="transform:scaleX(1.02)">۱<b class="z">۰</b><b class="z">۰</b>,<b class="z">۰</b><b class="z">۰</b><b class="z">۰</b>,<b class="z">۰</b><b class="z">۰</b><b class="z">۰</b></span></div>
<div class="nc np" style="left:129px;top:1178.000px;width:328px;height:23.000px;line-height:23.000px"><span class="s" style="transform:scaleX(1.02)">۱<b class="z">۰</b><b class="z">۰</b>,<b class="z">۰</b><b class="z">۰</b><b class="z">۰</b>,<b class="z">۰</b><b class="z">۰</b><b class="z">۰</b></span></div>
<div class="nc np" style="left:27px;top:1178.000px;width:101px;height:23.000px;line-height:23.000px"><span class="s" style="transform:scaleX(1.02)"><b class="z">۰</b></span></div>
</body></html>
